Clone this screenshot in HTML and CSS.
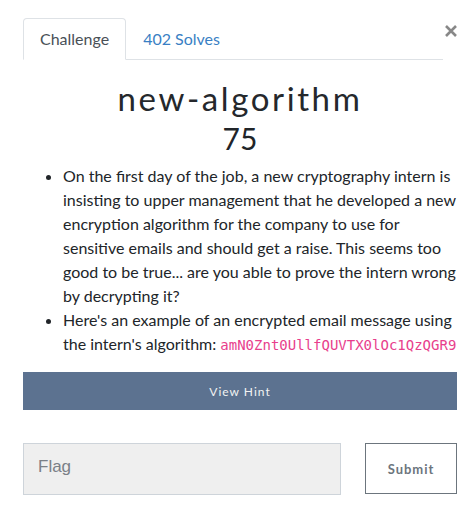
FILE: index.html
```html
<!DOCTYPE html>
<html>
<head>
<meta charset="utf-8">
<link rel="stylesheet" href="styles.css">
</head>
<body>
<div class="modal">
  <div class="head">
    <ul class="tabs">
      <li class="tab active">Challenge</li>
      <li class="tab link">402 Solves</li>
    </ul>
    <div class="close" aria-label="Close">
      <svg width="12" height="12" viewBox="0 0 12 12"><path d="M1 1 L11 11 M11 1 L1 11" stroke="#888" stroke-width="2.6" stroke-linecap="butt"/></svg>
    </div>
  </div>
  <h2 class="title">new-algorithm</h2>
  <h4 class="value">75</h4>
  <ul class="desc">
    <li>On the first day of the job, a new cryptography intern is insisting to upper management that he developed a new encryption algorithm for the company to use for sensitive emails and should get a raise. This seems too good to be true... are you able to prove the intern wrong by decrypting it?</li>
    <li>Here's an example of an encrypted email message using the intern's algorithm: <code>amN0Znt0UllfQUVTX0lOc1QzQGR9</code></li>
  </ul>
  <div class="hint">View Hint</div>
  <div class="form">
    <input class="flag" type="text" placeholder="Flag">
    <button class="submit">Submit</button>
  </div>
</div>
</body>
</html>
```
FILE: styles.css
```css
html, body {
  margin: 0;
  padding: 0;
  background: #fff;
}
body {
  font-family: Lato, "Noto Sans", sans-serif;
  color: #212529;
  font-size: 16px;
  line-height: 24px;
}
.modal {
  width: 434px;
  padding: 18px 0 0 23px;
}
.head {
  display: flex;
  align-items: flex-start;
}
.tabs {
  list-style: none;
  margin: 0;
  padding: 0;
  display: flex;
  width: 420px;
  border-bottom: 1px solid #dee2e6;
}
.tab {
  padding: 8px 16px;
  border: 1px solid transparent;
  border-radius: 4px 4px 0 0;
  margin-bottom: -1px;
}
.tab.active {
  color: #495057;
  border-color: #dee2e6 #dee2e6 #fff;
  background: #fff;
}
.tab.link {
  color: #3a7fc4;
}
.close {
  margin: 7px 0 0 2px;
  width: 12px;
  height: 12px;
  display: flex;
}
.title {
  margin: 18px 0 0;
  text-align: center;
  font-family: Lato, sans-serif;
  font-weight: 400;
  font-size: 33px;
  line-height: 40px;
  letter-spacing: 2.6px;
  color: #25282c;
}
.value {
  margin: 2px 0 8px;
  text-align: center;
  font-weight: 400;
  font-size: 30px;
  line-height: 36px;
}
.desc {
  margin: 0 0 15px;
  padding-left: 40px;
}
code {
  font-family: "DejaVu Sans Mono", monospace;
  font-size: 14px;
  color: #e83e8c;
}
.hint {
  height: 38px;
  line-height: 40px;
  background: #5c7290;
  color: #f2f2f2;
  text-align: center;
  font-size: 12px;
  letter-spacing: 1px;
}
.form {
  margin-top: 33px;
  display: flex;
  justify-content: space-between;
  align-items: flex-start;
}
.flag {
  box-sizing: border-box;
  width: 318px;
  height: 52px;
  margin: 0;
  padding: 0 14px 4px;
  background: #efefef;
  border: 1px solid #ced4da;
  font-family: "Liberation Sans", Arial, sans-serif;
  font-size: 17px;
  outline: none;
}
.flag::placeholder {
  color: #7a8087;
}
.submit {
  box-sizing: border-box;
  width: 92px;
  height: 51px;
  margin: 0;
  background: #fff;
  border: 1px solid #6c757d;
  color: #6c757d;
  font-family: Lato, sans-serif;
  font-weight: 700;
  font-size: 13px;
  letter-spacing: 1px;
  padding: 0;
}
```
